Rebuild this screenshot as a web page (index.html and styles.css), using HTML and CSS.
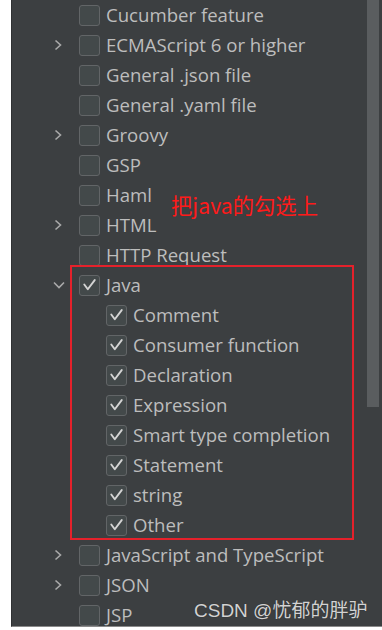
FILE: index.html
```html
<!DOCTYPE html>
<html>
<head>
<meta charset="utf-8">
<link rel="stylesheet" href="styles.css">
</head>
<body>
<div class="panel">
  <div class="row"><span class="chev"></span><span class="cb"></span><span class="label">Cucumber feature</span></div>
  <div class="row"><span class="chev"><svg viewBox="0 0 10 12" width="10" height="12"><path d="M2.5 1.5 L7.5 6 L2.5 10.5" /></svg></span><span class="cb"></span><span class="label">ECMAScript 6 or higher</span></div>
  <div class="row"><span class="chev"></span><span class="cb"></span><span class="label">General .json file</span></div>
  <div class="row"><span class="chev"></span><span class="cb"></span><span class="label">General .yaml file</span></div>
  <div class="row"><span class="chev"><svg viewBox="0 0 10 12" width="10" height="12"><path d="M2.5 1.5 L7.5 6 L2.5 10.5" /></svg></span><span class="cb"></span><span class="label">Groovy</span></div>
  <div class="row"><span class="chev"></span><span class="cb"></span><span class="label">GSP</span></div>
  <div class="row"><span class="chev"></span><span class="cb"></span><span class="label">Haml</span></div>
  <div class="row"><span class="chev"><svg viewBox="0 0 10 12" width="10" height="12"><path d="M2.5 1.5 L7.5 6 L2.5 10.5" /></svg></span><span class="cb"></span><span class="label">HTML</span></div>
  <div class="row"><span class="chev"></span><span class="cb"></span><span class="label">HTTP Request</span></div>
  <div class="row"><span class="chev"><svg viewBox="0 0 12 8" width="12" height="8"><path d="M1 1.5 L6 6.5 L11 1.5" /></svg></span><span class="cb checked"><svg viewBox="0 0 20 20" width="20" height="20"><path d="M4.5 9.5 L8.2 14.5 L15.5 4.8" /></svg></span><span class="label">Java</span></div>
  <div class="row sub"><span class="cb checked"><svg viewBox="0 0 20 20" width="20" height="20"><path d="M4.5 9.5 L8.2 14.5 L15.5 4.8" /></svg></span><span class="label">Comment</span></div>
  <div class="row sub"><span class="cb checked"><svg viewBox="0 0 20 20" width="20" height="20"><path d="M4.5 9.5 L8.2 14.5 L15.5 4.8" /></svg></span><span class="label">Consumer function</span></div>
  <div class="row sub"><span class="cb checked"><svg viewBox="0 0 20 20" width="20" height="20"><path d="M4.5 9.5 L8.2 14.5 L15.5 4.8" /></svg></span><span class="label">Declaration</span></div>
  <div class="row sub"><span class="cb checked"><svg viewBox="0 0 20 20" width="20" height="20"><path d="M4.5 9.5 L8.2 14.5 L15.5 4.8" /></svg></span><span class="label">Expression</span></div>
  <div class="row sub"><span class="cb checked"><svg viewBox="0 0 20 20" width="20" height="20"><path d="M4.5 9.5 L8.2 14.5 L15.5 4.8" /></svg></span><span class="label">Smart type completion</span></div>
  <div class="row sub"><span class="cb checked"><svg viewBox="0 0 20 20" width="20" height="20"><path d="M4.5 9.5 L8.2 14.5 L15.5 4.8" /></svg></span><span class="label">Statement</span></div>
  <div class="row sub"><span class="cb checked"><svg viewBox="0 0 20 20" width="20" height="20"><path d="M4.5 9.5 L8.2 14.5 L15.5 4.8" /></svg></span><span class="label">string</span></div>
  <div class="row sub"><span class="cb checked"><svg viewBox="0 0 20 20" width="20" height="20"><path d="M4.5 9.5 L8.2 14.5 L15.5 4.8" /></svg></span><span class="label">Other</span></div>
  <div class="row"><span class="chev"><svg viewBox="0 0 10 12" width="10" height="12"><path d="M2.5 1.5 L7.5 6 L2.5 10.5" /></svg></span><span class="cb"></span><span class="label">JavaScript and TypeScript</span></div>
  <div class="row"><span class="chev"><svg viewBox="0 0 10 12" width="10" height="12"><path d="M2.5 1.5 L7.5 6 L2.5 10.5" /></svg></span><span class="cb"></span><span class="label">JSON</span></div>
  <div class="row"><span class="chev"></span><span class="cb"></span><span class="label">JSP</span></div>

  <div class="scrollbar"></div>
  <div class="highlight"></div>
  <div class="note">把java的勾选上</div>
  <div class="watermark">CSDN @忧郁的胖驴</div>
</div>
</body>
</html>
```
FILE: styles.css
```css
html, body {
  margin: 0;
  padding: 0;
  background: #ffffff;
}
.panel {
  position: relative;
  margin-left: 11px;
  width: 370px;
  height: 626px;
  background: #3c3f41;
  border-left: 1px solid #2f3133;
  border-bottom: 1px solid #8a8a8a;
  overflow: hidden;
  font-family: "Open Sans", "Noto Sans", sans-serif;
  font-size: 18.6px;
  color: #bdbdbd;
}
.row {
  display: flex;
  align-items: center;
  height: 30px;
  padding-left: 41px;
  white-space: nowrap;
}
.row.sub {
  padding-left: 94px;
}
.chev {
  width: 26px;
  height: 12px;
  display: flex;
  align-items: center;
}
.chev svg path {
  fill: none;
  stroke: #a9a9a9;
  stroke-width: 1.6;
}
.cb {
  box-sizing: border-box;
  width: 21px;
  height: 21px;
  border: 1px solid #626567;
  border-radius: 3px;
  background: #43494a;
  margin-right: 6px;
  flex: none;
  display: flex;
  align-items: center;
  justify-content: center;
}
.cb svg {
  display: block;
}
.cb svg path {
  fill: none;
  stroke: #d4d4d4;
  stroke-width: 2;
  stroke-linecap: round;
  stroke-linejoin: round;
}
.label {
  line-height: 30px;
  margin-top: -1px;
}
.scrollbar {
  position: absolute;
  left: 355px;
  top: 0;
  width: 12px;
  height: 407px;
  background: #5a5d5f;
}
.highlight {
  position: absolute;
  left: 58px;
  top: 265px;
  width: 280px;
  height: 271px;
  border: 2px solid #e5212b;
}
.note {
  position: absolute;
  left: 159px;
  top: 190px;
  font-family: "Noto Sans CJK SC", sans-serif;
  font-size: 21.3px;
  line-height: 30px;
  color: #ff1a1a;
}
.watermark {
  position: absolute;
  left: 182px;
  top: 598px;
  font-family: "Liberation Sans", "Noto Sans CJK SC", sans-serif;
  font-size: 19px;
  line-height: 26px;
  color: #d2d2d2;
  text-shadow: 0 0 1px rgba(0,0,0,0.4);
}
```
